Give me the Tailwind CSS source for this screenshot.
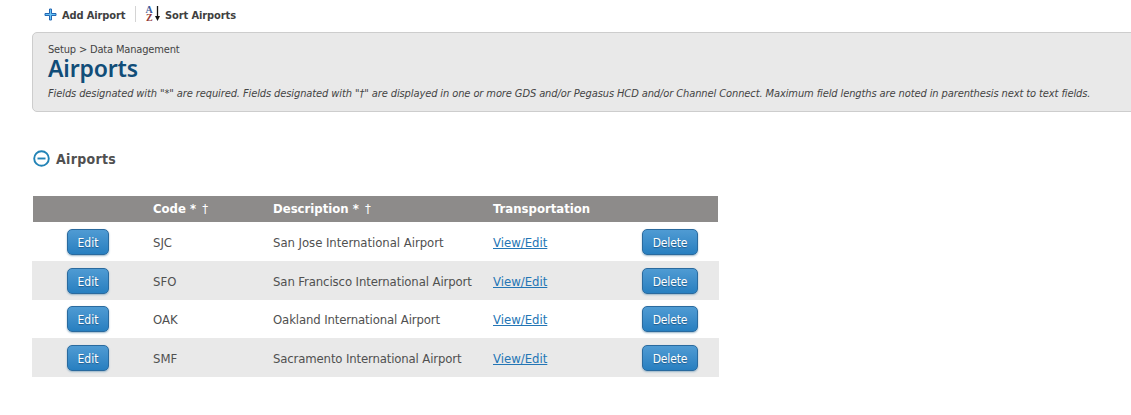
<!DOCTYPE html>
<html lang="en"><head><meta charset="utf-8"><title>Airports</title>
<script src="https://cdn.jsdelivr.net/npm/@tailwindcss/browser@4"></script></head>
<body class="bg-white font-['DejaVu_Sans_Condensed','DejaVu_Sans',sans-serif] text-[#505050] overflow-hidden">
<nav class="flex h-8 items-start pl-[44px] text-[11px] font-bold leading-4 text-[#3f3f3f] whitespace-nowrap">
  <a class="flex w-[91px]"><svg class="mt-2 mr-[5px] size-[13px] shrink-0" viewBox="0 0 13 13"><path d="M5.500 1h2v4.500h4.500v2h-4.500v4.500h-2v-4.500h-4.500v-2h4.500z" fill="#69c3f5" stroke="#2367b3"/></svg><span class="mt-2 tracking-[-0.13px]">Add Airport</span></a>
  <span class="mt-1.5 h-4 w-px bg-[#d4d4d4]"></span>
  <a class="flex pl-[9px]"><svg class="mt-[5px] mr-[3px] size-[17px] shrink-0" viewBox="0 0 17 17"><g font-family="Liberation Serif, serif" font-size="10" font-weight="bold"><text x="0.500" y="8" fill="#3c5a9a">A</text><text x="1" y="16" fill="#943a3a">Z</text></g><path d="M12.500 1v12" stroke="#111" stroke-width="1.300"/><path d="M10 11h5l-2.500 5z" fill="#111"/></svg><span class="mt-2 tracking-[-0.1px]">Sort Airports</span></a>
</nav>
<header class="ml-8 -mr-2 h-20 rounded-[5px] border border-[#cdcdcd] bg-[#e9e9e9] pl-[15px] pt-[11px] whitespace-nowrap">
  <div class="text-[11px] leading-[12px] tracking-[-0.17px] text-[#444]">Setup &gt; Data Management</div>
  <h1 class="font-['Noto_Sans',sans-serif] text-[23px] font-semibold leading-[25px] tracking-[-0.15px] text-[#114d78]">Airports</h1>
  <p class="mt-[6px] text-[11px] italic leading-[14px] tracking-[-0.1px] text-[#444]">Fields designated with "*" are required. Fields designated with "†" are displayed in one or more GDS and/or Pegasus HCD and/or Channel Connect. Maximum field lengths are noted in parenthesis next to text fields.</p>
</header>
<main class="ml-8 w-[687px]">
  <h2 class="flex h-[84px] items-start gap-[6px] pl-px pt-[37px] text-[14px] font-bold leading-5 tracking-[0.3px] text-[#505050]"><svg class="mt-px size-[17px]" viewBox="0 0 17 17" fill="none" stroke="#2283b6" stroke-width="1.900"><circle cx="8.500" cy="8.500" r="7.300"/><path d="M4.500 8.500h8"/></svg>Airports</h2>
  <div class="mx-px mb-px grid h-[26px] grid-cols-[119px_120px_220px_1fr] items-center bg-[#8d8b8a] text-[13px] font-bold text-white [&>*]:pl-px"><span></span><span>Code * <span class="pl-[2px] font-normal">†</span></span><span>Description * <span class="pl-[2px] font-normal">†</span></span><span>Transportation</span></div>
  <div id="rows"></div>
</main>
<template id="row">
  <div class="grid grid-cols-[121px_120px_220px_149px_1fr] items-center text-[13px] leading-5 even:bg-[#e9e9e9] whitespace-nowrap">
    <button class="ml-[35px] h-[26px] w-[42px] rounded-[5px] border border-[#2a6a9e] bg-linear-to-b from-[#4f9bd3] to-[#277fc0] pt-px text-[12px] leading-6 text-white text-shadow-[0_1px_1px_#205d8c] shadow-[0_1px_2px_#99b5c8]">Edit</button>
    <span data-code class="pt-[2px]"></span><span data-name class="pt-[2px]"></span>
    <a class="pt-[2px] text-[#2476b5] underline underline-offset-1">View/Edit</a>
    <button class="h-[26px] w-[56px] rounded-[5px] border border-[#2a6a9e] bg-linear-to-b from-[#4f9bd3] to-[#277fc0] pt-px text-[12px] leading-6 tracking-[-0.15px] text-white text-shadow-[0_1px_1px_#205d8c] shadow-[0_1px_2px_#99b5c8]">Delete</button>
  </div>
</template>
<script>
const airports = [
  ['SJC','San Jose International Airport','-0.04px',38],
  ['SFO','San Francisco International Airport','-0.1px',39],
  ['OAK','Oakland International Airport','-0.12px',38],
  ['SMF','Sacramento International Airport','-0.14px',39]
];
for (const [code,name,spacing,height] of airports) {
  const row = document.getElementById('row').content.firstElementChild.cloneNode(true);
  row.style.height = height + 'px';
  row.querySelector('[data-code]').textContent = code;
  const label = row.querySelector('[data-name]');
  label.textContent = name;
  label.style.letterSpacing = spacing;
  document.getElementById('rows').append(row);
}
</script>
</body></html>
